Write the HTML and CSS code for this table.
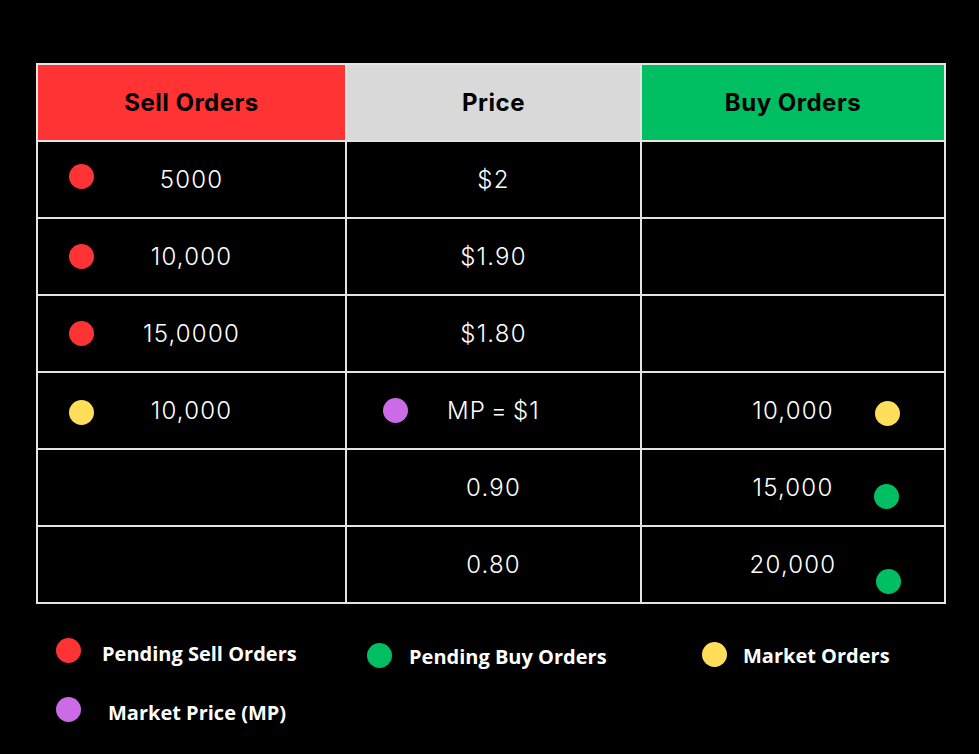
FILE: index.html
```html
<!DOCTYPE html>
<html lang="en">
<head>
<meta charset="utf-8">
<title>Order Book</title>
<link rel="stylesheet" href="styles.css">
</head>
<body>
<main class="page">
  <div class="book">
    <div class="cell head head--sell">Sell Orders</div>
    <div class="cell head head--price">Price</div>
    <div class="cell head head--buy">Buy Orders</div>

    <div class="cell"><span class="dot dot--red dot--l1"></span>5000</div>
    <div class="cell">$2</div>
    <div class="cell"></div>

    <div class="cell"><span class="dot dot--red dot--l2"></span>10,000</div>
    <div class="cell">$1.90</div>
    <div class="cell"></div>

    <div class="cell"><span class="dot dot--red dot--l3"></span>15,0000</div>
    <div class="cell">$1.80</div>
    <div class="cell"></div>

    <div class="cell"><span class="dot dot--yellow dot--l4"></span>10,000</div>
    <div class="cell"><span class="dot dot--purple dot--m4"></span>MP = $1</div>
    <div class="cell"><span class="dot dot--yellow dot--r4"></span>10,000</div>

    <div class="cell"></div>
    <div class="cell">0.90</div>
    <div class="cell"><span class="dot dot--green dot--r5"></span>15,000</div>

    <div class="cell"></div>
    <div class="cell">0.80</div>
    <div class="cell"><span class="dot dot--green dot--r6"></span>20,000</div>
  </div>

  <div class="legend">
    <div class="legend-item legend-item--sell"><span class="ldot dot--red"></span><span class="ltext">Pending Sell Orders</span></div>
    <div class="legend-item legend-item--buy"><span class="ldot dot--green"></span><span class="ltext">Pending Buy Orders</span></div>
    <div class="legend-item legend-item--market"><span class="ldot dot--yellow"></span><span class="ltext">Market Orders</span></div>
    <div class="legend-item legend-item--mp"><span class="ldot dot--purple"></span><span class="ltext">Market Price (MP)</span></div>
  </div>
</main>
</body>
</html>
```

FILE: styles.css
```css
html, body {
  margin: 0;
  padding: 0;
  background: #000;
}

.page {
  width: 979px;
  height: 754px;
  box-sizing: border-box;
  padding: 63px 0 0 36px;
  background: #000;
  font-family: "Inter", "Liberation Sans", sans-serif;
}

.book {
  display: grid;
  grid-template-columns: 307px 293px 302px;
  grid-template-rows: 75px repeat(6, 75px);
  gap: 2px;
  padding: 2px;
  width: max-content;
  background: #e4e4e4;
}

.cell {
  position: relative;
  display: flex;
  align-items: center;
  justify-content: center;
  background: #000;
  color: #fff;
  font-size: 24px;
  font-weight: 300;
  letter-spacing: 1.2px;
  word-spacing: -3px;
}

.head {
  color: #000;
  font-size: 24px;
  font-weight: 700;
  letter-spacing: 0.5px;
  word-spacing: 0;
}

.head--sell { background: #ff3333; }
.head--price { background: #d9d9d9; }
.head--buy { background: #00bf63; }

.dot {
  position: absolute;
  width: 25px;
  height: 25px;
  border-radius: 50%;
}

.dot--red { background: #ff3333; }
.dot--yellow { background: #ffde59; }
.dot--green { background: #00bf63; }
.dot--purple { background: #cb6ce6; }

.dot--l1 { left: 31px; top: 22px; }
.dot--l2 { left: 31px; top: 25px; }
.dot--l3 { left: 31px; top: 25px; }
.dot--l4 { left: 31px; top: 27px; }
.dot--m4 { left: 36px; top: 25px; }
.dot--r4 { left: 233px; top: 28px; }
.dot--r5 { left: 232px; top: 34px; }
.dot--r6 { left: 234px; top: 42px; }

.legend {
  display: grid;
  grid-template-columns: 311px 335px auto;
  row-gap: 29px;
  margin: 34px 0 0 20px;
  font-family: "Open Sans", "Liberation Sans", sans-serif;
  font-weight: 700;
  font-size: 20px;
  color: #fff;
}

.legend-item {
  display: flex;
  align-items: center;
  gap: 21px;
  height: 25px;
}

.ldot {
  flex: none;
  width: 25px;
  height: 25px;
  border-radius: 50%;
}

.ltext {
  white-space: nowrap;
  line-height: 25px;
}

.legend-item--sell .ltext { position: relative; top: 3px; }
.legend-item--buy { gap: 17px; margin-top: 5px; }
.legend-item--buy .ltext { position: relative; top: 1px; }
.legend-item--market { gap: 16px; margin-top: 4px; }
.legend-item--market .ltext { position: relative; top: 1px; }
.legend-item--mp { gap: 27px; }
.legend-item--mp .ltext { position: relative; top: 3px; }
```
